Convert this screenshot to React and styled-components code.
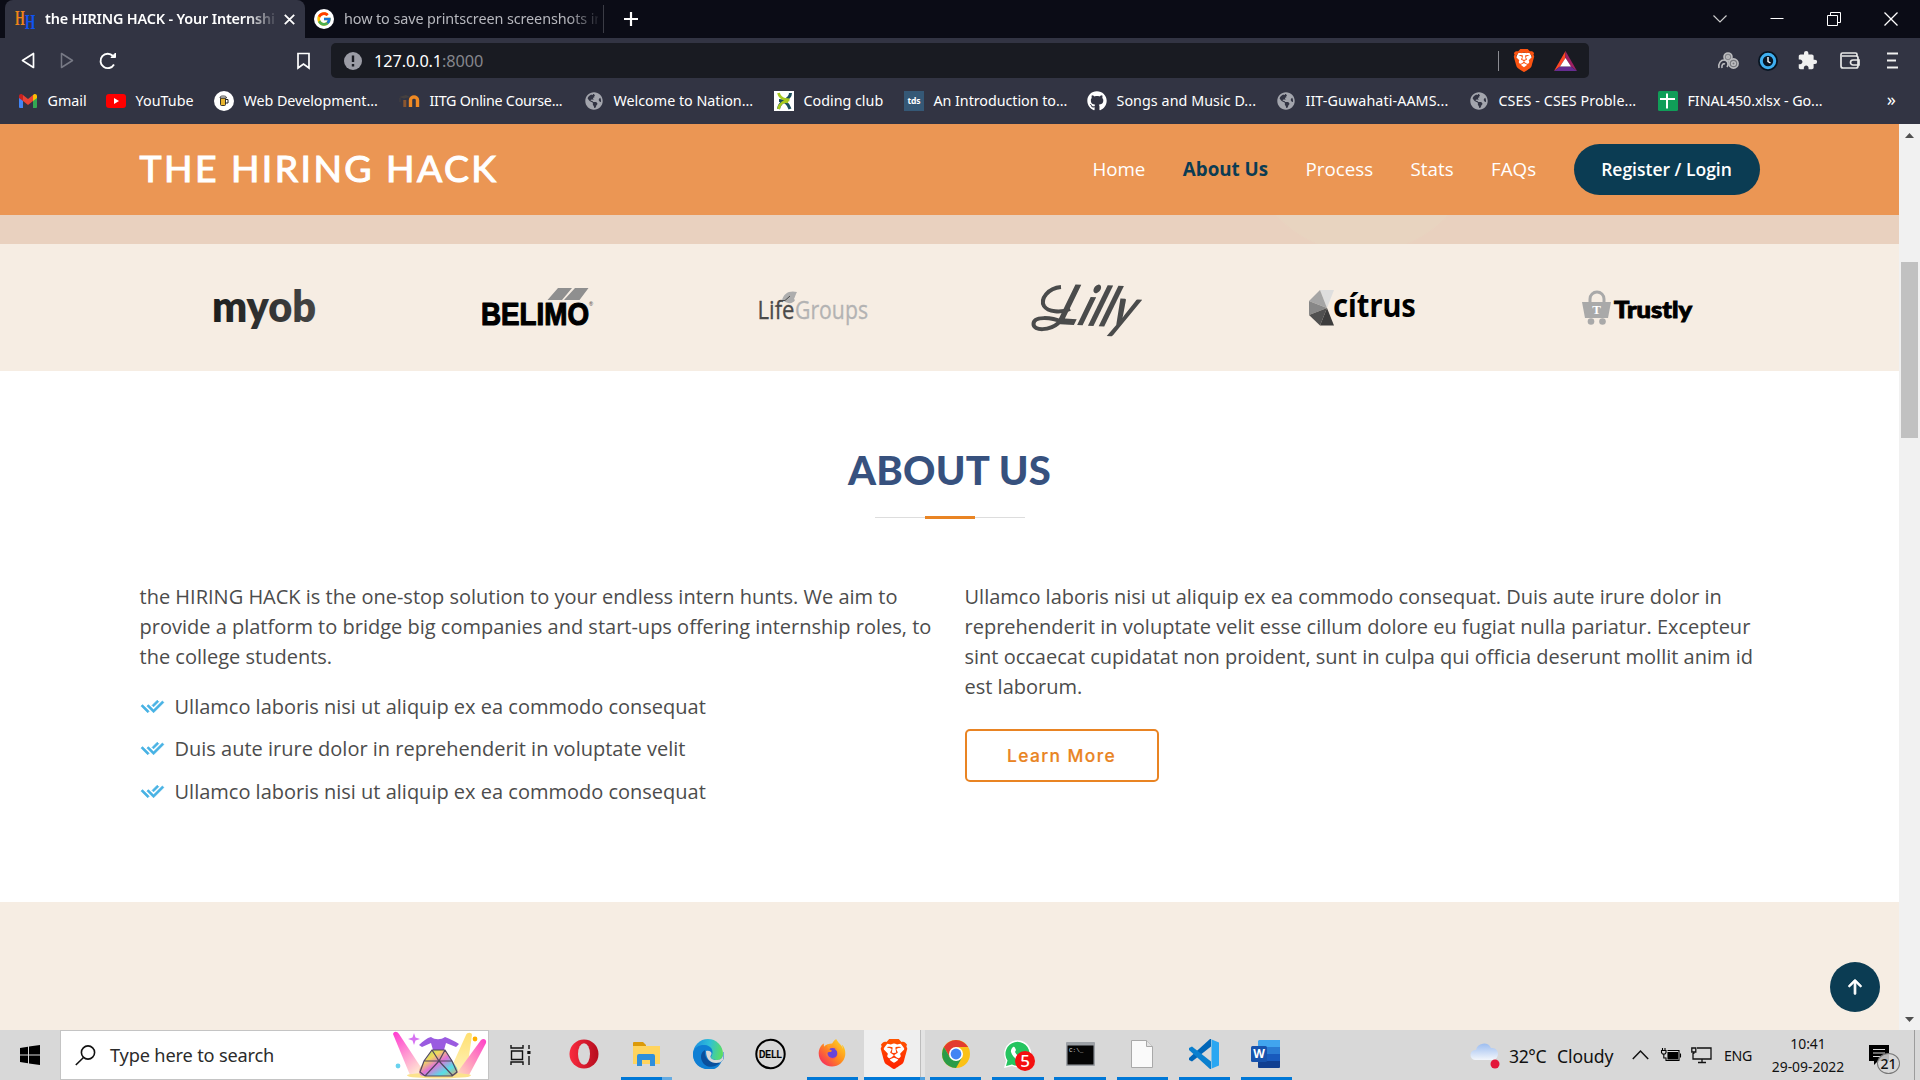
import React from "react";
import styled, { createGlobalStyle, css } from "styled-components";
import { RiCheckDoubleLine } from "react-icons/ri";
import { BsArrowUpShort } from "react-icons/bs";
import { FcGoogle } from "react-icons/fc";
import { SiBrave } from "react-icons/si";
import { FaGithub, FaGlobeAmericas, FaFirefoxBrowser } from "react-icons/fa";
import { MdExtension } from "react-icons/md";

const UI = `"Noto Sans", "Open Sans", sans-serif`;
const BODY = `"Open Sans", "Noto Sans", sans-serif`;
const HEAD = `Lato, "Open Sans", sans-serif`;

const Global = createGlobalStyle`
  * { box-sizing: border-box; }
  body { margin: 0; background: #fff; overflow: hidden; }
  svg { display: block; flex: none; overflow: visible; }
`;

const Screen = styled.div`
  width: 1920px;
  height: 1080px;
  display: flex;
  flex-direction: column;
  overflow: hidden;
  font-family: ${UI};
`;

/* ---------- browser chrome ---------- */
const TabStrip = styled.div`
  height: 38px;
  background: #0b0c16;
  display: flex;
  align-items: stretch;
  padding-left: 5px;
`;
const Tab = styled.div`
  display: flex;
  align-items: center;
  width: ${(p) => p.$w}px;
  padding-left: ${(p) => (p.$active ? 10 : 9)}px;
  gap: 10px;
  font-size: 14.4px;
  color: #b6b7bd;
  white-space: nowrap;
  ${(p) =>
    p.$active &&
    css`
      background: #323443;
      color: #fff;
      font-weight: 600;
      border-radius: 8px 8px 0 0;
    `}
`;
const TabTitle = styled.div`
  width: ${(p) => p.$w}px;
  overflow: hidden;
  padding-bottom: 1px;
  letter-spacing: ${(p) => p.$ls}px;
  mask-image: linear-gradient(90deg, #000 88%, rgba(0, 0, 0, 0.12));
`;
const TabSep = styled.div`
  width: 1px;
  height: 28px;
  align-self: center;
  margin-left: 1px;
  background: #3b3c45;
`;
const NewTab = styled.div`
  display: flex;
  align-items: center;
  margin-left: 19px;
`;
const WindowButtons = styled.div`
  margin-left: auto;
  display: flex;
  align-items: center;
  gap: 43px;
  padding-right: 22px;
`;
const Toolbar = styled.div`
  height: 45px;
  background: #323443;
  display: flex;
  align-items: center;
  padding: 0 22px 0 21px;
`;
const NavButtons = styled.div`
  display: flex;
  align-items: center;
  gap: 25px;
  width: 275px;
`;
const AddressBar = styled.div`
  width: 1258px;
  height: 35px;
  margin-left: 20px;
  background: #191b22;
  border-radius: 5px;
  display: flex;
  align-items: center;
  padding: 0 12px 0 13px;
`;
const Url = styled.div`
  margin-left: 12px;
  flex: 1;
  color: #fff;
  font-size: 16.3px;
  letter-spacing: -0.1px;
  span { color: #85868c; }
`;
const BarDivider = styled.div`
  width: 1px;
  height: 20px;
  margin-right: 15px;
  background: #8b8c92;
`;
const Extensions = styled.div`
  margin-left: auto;
  display: flex;
  align-items: center;
  gap: 20px;
`;
const Bookmarks = styled.div`
  height: 41px;
  background: #323443;
  display: flex;
  align-items: center;
  padding: 0 24px 6px 18px;
  color: #fff;
`;
const Bookmark = styled.div`
  width: ${(p) => p.$w}px;
  display: flex;
  align-items: center;
  gap: 9.5px;
  font-size: 14.3px;
  letter-spacing: ${(p) => p.$ls || 0}px;
  white-space: nowrap;
`;
const IconBox = styled.div`
  width: 20px;
  display: flex;
  justify-content: center;
  color: #a3a5ad;
`;
const Square = styled.div`
  width: 20px;
  height: 20px;
  background: #355876;
  color: #fff;
  font: 700 8.5px/20px ${UI};
  text-align: center;
`;
const Overflow = styled.div`
  margin-left: auto;
  font-size: 18px;
  line-height: 18px;
  padding-bottom: 4px;
`;

/* ---------- web page ---------- */
const Viewport = styled.div`
  height: 906px;
  display: flex;
`;
const Page = styled.div`
  width: 1899px;
  display: flex;
  flex-direction: column;
  position: relative;
`;
const Header = styled.header`
  height: 91px;
  background: #eb9654;
  display: flex;
  align-items: center;
  padding: 0 139.5px;
`;
const Logo = styled.h1`
  margin: 0;
  padding-bottom: 3px;
  font: 400 37.3px/1 ${HEAD};
  -webkit-text-stroke: 1.1px #fff;
  letter-spacing: 2.45px;
  color: #fff;
  flex: 1;
  white-space: nowrap;
`;
const Nav = styled.nav`
  display: flex;
  align-items: center;
  gap: 37.4px;
  font: 500 18.77px/1 ${BODY};
  white-space: nowrap;
`;
const NavLink = styled.a`
  color: ${(p) => (p.$active ? "#0b3c53" : "#fff")};
  font-weight: ${(p) => (p.$active ? 700 : 500)};
`;
const Register = styled.a`
  width: 186px;
  height: 51px;
  border-radius: 26px;
  background: #0b3c53;
  color: #fff;
  font-weight: 600;
  font-size: 17.5px;
  display: flex;
  align-items: center;
  justify-content: center;
`;
const HeroEdge = styled.div`
  height: 29px;
  background: radial-gradient(circle 118px at 1362px -79.5px, #e8d4c0 98.5%, rgba(232, 212, 192, 0) 100%), #e9d1bf;
`;
const Clients = styled.section`
  height: 127px;
  background: #f6ede3;
  display: flex;
  align-items: center;
  padding: 0 124.5px;
`;
const Client = styled.div`
  flex: 1;
  display: flex;
  justify-content: center;
`;
const About = styled.section`
  height: 531px;
  background: #fff;
  padding: 75px 124.5px 0;
`;
const Heading = styled.h2`
  margin: 0;
  height: 49px;
  font: 900 40px/49px ${HEAD};
  letter-spacing: 0.25px;
  color: #37517e;
  text-align: center;
`;
const Divider = styled.div`
  width: 150px;
  height: 3px;
  margin: 21px auto 0;
  background: linear-gradient(#e98423, #e98423) center / 50px 3px no-repeat,
    linear-gradient(#ddd, #ddd) 0 1px / 150px 1px no-repeat;
`;
const Columns = styled.div`
  display: grid;
  grid-template-columns: 1fr 1fr;
  margin-top: 63px;
`;
const Column = styled.div`
  padding: 0 15px;
  font: 400 20px/30px ${BODY};
  color: #4c4c4c;
`;
const Paragraph = styled.p`
  margin: 0 0 20px;
`;
const Item = styled.div`
  display: flex;
  gap: 10px;
  height: 42.4px;
  svg { margin-top: 2px; color: #47b2e4; stroke: #47b2e4; stroke-width: 0.7px; }
`;
const LearnMore = styled.a`
  display: inline-flex;
  align-items: center;
  justify-content: center;
  width: 194px;
  height: 53px;
  margin-top: 7px;
  border: 2px solid #e98423;
  border-radius: 5px;
  color: #e98423;
  font: 500 17.4px/1 Inter, sans-serif;
  -webkit-text-stroke: 0.2px #e98423;
  letter-spacing: 1.4px;
`;
const Next = styled.section`
  flex: 1;
  background: #f6ede3;
`;
const BackToTop = styled.div`
  position: absolute;
  right: 19px;
  bottom: 18px;
  width: 50px;
  height: 50px;
  border-radius: 50%;
  background: #0b3c53;
  color: #fff;
  display: flex;
  align-items: center;
  justify-content: center;
  svg { stroke: #fff; stroke-width: 0.4px; }
`;
const Scrollbar = styled.div`
  width: 21px;
  background: #f1f1f1;
  display: flex;
  flex-direction: column;
  align-items: center;
  padding: 9px 0 8px;
`;
const Thumb = styled.div`
  width: 17px;
  height: 176px;
  margin-top: 124px;
  margin-bottom: auto;
  background: #c1c1c1;
`;

/* ---------- taskbar ---------- */
const Taskbar = styled.div`
  height: 50px;
  background: #d8d8d8;
  display: flex;
  align-items: stretch;
  color: #111;
`;
const Start = styled.div`
  width: 60px;
  display: flex;
  align-items: center;
  justify-content: center;
`;
const Search = styled.div`
  width: 429px;
  background: #fff;
  border: 1px solid #c4c4c4;
  display: flex;
  align-items: center;
  padding-left: 14px;
  font-size: 18.2px;
  color: #2b2b2b;
  span { flex: 1; margin-left: 14px; letter-spacing: -0.17px; }
`;
const TaskView = styled.div`
  width: 64px;
  display: flex;
  align-items: center;
  padding-left: 21px;
`;
const TaskApp = styled.div`
  width: 62px;
  display: flex;
  align-items: center;
  justify-content: center;
  background: ${(p) =>
    p.$active
      ? "linear-gradient(90deg,transparent 1px,#efefef 1px,#efefef 57px,#bdbdbd 57px,#bdbdbd 58px,#e4e4e4 58px)"
      : "none"};
  border-bottom: 3px solid transparent;
  border-image: ${(p) =>
      p.$mark === "stack"
        ? "linear-gradient(90deg,transparent 6px,#0078d7 6px,#0078d7 47px,#65abe2 47px,#65abe2 57px,transparent 57px)"
        : p.$mark === "wide"
          ? "linear-gradient(90deg,transparent 1px,#0078d7 1px,#0078d7 57px,#4d9fdf 57px)"
          : p.$mark
            ? "linear-gradient(90deg,transparent 5.5px,#0078d7 5.5px,#0078d7 56.5px,transparent 56.5px)"
            : "linear-gradient(transparent,transparent)"}
    0 0 1 0;
`;
const Badge = styled.div`
  position: absolute;
  right: -3px;
  bottom: -3px;
  width: 20px;
  height: 20px;
  border-radius: 50%;
  background: #f40f0f;
  color: #fff;
  font: 500 17px/20px ${UI};
  text-align: center;
`;
const Stack = styled.div`
  position: relative;
`;
const Tray = styled.div`
  margin-left: auto;
  display: flex;
  align-items: center;
  white-space: nowrap;
`;
const TrayText = styled.div`
  width: ${(p) => p.$w}px;
  margin-left: ${(p) => p.$ml || 0}px;
  font-size: ${(p) => p.$size}px;
  letter-spacing: ${(p) => p.$ls || 0}px;
  padding-top: ${(p) => (p.$size > 16 ? 2 : 0)}px;
`;
const TrayIcon = styled.div`
  margin-left: ${(p) => p.$ml || 0}px;
`;
const Clock = styled.div`
  width: 92px;
  text-align: center;
  font-size: 13.9px;
  line-height: 23px;
  letter-spacing: 0;
`;
const Notice = styled.div`
  position: relative;
  margin-left: 15px;
  width: 45px;
`;
const Count = styled.div`
  position: absolute;
  left: 8px;
  top: 8px;
  width: 23px;
  height: 21px;
  border: 1px solid #777;
  border-radius: 50%;
  background: rgba(216, 216, 216, 0.85);
  font: 500 14px/19px ${UI};
  text-align: center;
`;
const ShowDesktop = styled.div`
  width: 6px;
  align-self: stretch;
  border-left: 1px solid #9c9c9c;
`;

const Globe = () => <FaGlobeAmericas size={18} />;

const Gmail = () => (
  <svg width="18" height="14" viewBox="0 0 18 14">
    <path d="M0 2v11a1 1 0 0 0 1 1h3V6z" fill="#4285f4" />
    <path d="M18 2v11a1 1 0 0 1-1 1h-3V6z" fill="#34a853" />
    <path d="M14 1v6l4-3V2c0-2-2-2.500-3-1.700z" fill="#fbbc04" />
    <path d="M0 2v2l4 3V1L3 .3C2-.5 0 0 0 2z" fill="#c5221f" />
    <path d="M4 1v6l5 4 5-4V1L9 5z" fill="#ea4335" />
  </svg>
);
const YouTube = () => (
  <svg width="20" height="14" viewBox="0 0 20 14">
    <rect width="20" height="14" rx="3" fill="#f00" />
    <path d="M8 4v6l5-3z" fill="#fff" />
  </svg>
);
const Beer = () => (
  <svg width="20" height="20" viewBox="0 0 20 20">
    <circle cx="10" cy="10" r="10" fill="#fff" />
    <rect x="6.500" y="7" width="5" height="7.500" rx="1" fill="#e9b52e" stroke="#222" strokeWidth=".9" />
    <path d="M11.500 8.500H14v3.500h-2.500" fill="none" stroke="#222" />
    <path d="M6 7c0-2 1.500-2 3-2s3.500 0 3.500 2z" fill="#eee" stroke="#222" strokeWidth=".8" />
  </svg>
);
const Moodle = () => (
  <svg width="20" height="14" viewBox="0 0 20 14">
    <path d="M-1 3l7-2 4 2-6 1.500z" fill="#454040" />
    <path d="M0 4v4" stroke="#454040" />
    <path d="M4.800 13V6" stroke="#8a5630" strokeWidth="3" />
    <path d="M10.500 13V6c0-4 7-4 7 0v7" fill="none" stroke="#f08a24" strokeWidth="3.400" />
  </svg>
);
const CodingClub = () => (
  <svg width="20" height="20" viewBox="0 0 20 20">
    <rect width="20" height="20" fill="#fff" />
    <path d="M16.500 2c0 4-3 6-6.500 8-3 2-5 4-5.500 8M5 9.500c4 0 9 2 11 8.500" stroke="#1b4d5c" strokeWidth="3" fill="none" />
    <path d="M4.500 2c1 4 3 5.500 7 6.500l4 .5M14 11c-4-1-8 1-9.500 7" stroke="#a8c91f" strokeWidth="2.800" fill="none" />
  </svg>
);
const Sheets = () => (
  <svg width="20" height="20" viewBox="0 0 20 20">
    <rect width="20" height="20" rx="1.500" fill="#109d58" />
    <path d="M2 8h15M9 2.500v15" stroke="#fff" strokeWidth="2" />
  </svg>
);

const bookmarks = [
  ["Gmail", 88, <Gmail />, 0],
  ["YouTube", 108, <YouTube />, 0.05],
  ["Web Development...", 186, <Beer />, -0.05],
  ["IITG Online Course...", 184, <Moodle />, -0.26],
  ["Welcome to Nation...", 190, <Globe />, 0],
  ["Coding club", 130, <CodingClub />, 0],
  ["An Introduction to...", 183, <Square>tds</Square>, -0.04],
  ["Songs and Music D...", 189, <FaGithub size={20} color="#fff" />, 0.06],
  ["IIT-Guwahati-AAMS...", 193, <Globe />, 0.09],
  ["CSES - CSES Proble...", 189, <Globe />, 0.08],
  ["FINAL450.xlsx - Go...", 170, <Sheets />, -0.07],
];

const Chrome = () => (
  <svg width="28" height="28" viewBox="0 0 28 28">
    <circle cx="14" cy="14" r="14" fill="#fbc116" />
    <path d="M1.900 7A14 14 0 0 1 26.100 7H14L8 17.500z" fill="#e33b2e" />
    <path d="M1.900 7A14 14 0 0 0 14 28l6-10.500H8z" fill="#2a9c48" />
    <circle cx="14" cy="14" r="7" fill="#fff" />
    <circle cx="14" cy="14" r="5.400" fill="#4285f4" />
  </svg>
);
const Edge = () => (
  <svg width="30" height="30" viewBox="0 0 30 30">
    <circle cx="15" cy="15" r="15" fill="url(#gEdge)" />
    <path d="M0 14C1 8 7 5.500 12 6c5 .5 8 4 7.500 8-.3 2-1.500 3-1.500 4 0 2 3 3 6 3 3.500 0 5-2 6-5v-3h.5v10L24 30H12C4 28-.5 22 0 14z" fill="#0f7fd4" />
    <path d="M12 11c-4 2-5 7-3 11 2 5 8 7 13 5 3-1 5-3 6-5-1 .5-3 1.500-6 1.300-7-.3-11-5-10-12.300z" fill="#0a4f9c" />
    <path d="M13 12c3-1 6 .5 5.500 3-.5 1.500-1.500 2-.8 3.500 1 2 4 2.700 7 2.500 3.500-.3 4.500-2.300 5.300-4.500v4.500l-3 2.500c-8 2-14-2-14-11.500z" fill="#d8d8d8" />
    <path d="M31 20v11H19c5-1.500 8-4.500 9.500-8.500z" fill="#d8d8d8" />
  </svg>
);
const Dell = () => (
  <svg width="31" height="30" viewBox="0 0 31 30">
    <ellipse cx="15.500" cy="15" rx="14.200" ry="14.200" fill="none" stroke="#000" strokeWidth="2" />
    <text x="4" y="18.800" fontSize="10.800" fontWeight="700" fontFamily="Liberation Sans, Arial, sans-serif" stroke="#000" strokeWidth=".2" textLength="23" lengthAdjust="spacingAndGlyphs">DELL</text>
  </svg>
);
const Firefox = () => (
  <svg width="29" height="29" viewBox="0 0 29 29">
    <circle cx="14" cy="15.500" r="11" fill="url(#gFoxBody)" />
    <circle cx="14.500" cy="14" r="5" fill="#6a45d8" />
    <FaFirefoxBrowser size={28} fill="url(#gFox)" />
  </svg>
);
const Opera = () => (
  <svg width="30" height="30" viewBox="0 0 30 30">
    <ellipse cx="15" cy="15" rx="14.500" ry="14.500" fill="url(#gOpera)" />
    <ellipse cx="15" cy="15" rx="6" ry="10.800" fill="#d8d8d8" />
  </svg>
);
const Explorer = () => (
  <svg width="28" height="24" viewBox="0 0 28 24">
    <path d="M1 1a1 1 0 0 1 1-1h9l3 3v5H1z" fill="#dc9a09" />
    <path d="M1 4h27v18H1z" fill="#ffd45e" />
    <path d="M5 24V14a2 2 0 0 1 2-2h14a2 2 0 0 1 2 2v10h-5v-6h-8v6z" fill="#2f8fdc" />
  </svg>
);
const Terminal = () => (
  <svg width="29" height="24" viewBox="0 0 29 24">
    <rect width="29" height="24" rx="1" fill="#9da1a6" />
    <rect x="1.500" y="3.500" width="26" height="19" fill="#050505" />
    <text x="3" y="10" fontSize="6" fill="#ddd" fontFamily="Liberation Mono, monospace">C:\_</text>
  </svg>
);
const FileIcon = () => (
  <svg width="22" height="28" viewBox="0 0 22 28">
    <path d="M.5.5h15l6 6v21H.5z" fill="#fafafa" stroke="#a9a9a9" />
    <path d="M15.500.5v6h6" fill="#e3e3e3" stroke="#a9a9a9" />
  </svg>
);
const VSCode = () => (
  <svg width="30" height="30" viewBox="0 0 30 30">
    <path d="M22 7.500L3 22.500 0 21v-2L21 0h1z" fill="#0066b8" />
    <path d="M22 22.500L3 7.500 0 9v2l21 19h1z" fill="#0a80cf" />
    <path d="M21.500 0L30 3.500v23L21.500 30c1 0 1-1 1-1V1s0-1-1-1z" fill="#2aa7f2" />
  </svg>
);
const Word = () => (
  <svg width="30" height="28" viewBox="0 0 30 28">
    <path d="M8 0h21v7H7V1z" fill="#41a5ee" />
    <path d="M7 7h22v7H7z" fill="#2b7cd3" />
    <path d="M7 14h22v7H7z" fill="#185abd" />
    <path d="M7 21h22v6a1 1 0 0 1-1 1H8a1 1 0 0 1-1-1z" fill="#103f91" />
    <rect y="6" width="16" height="16" rx="1.500" fill="#1753ad" />
    <text x="8" y="18.300" fontSize="12" fontWeight="700" textAnchor="middle" fill="#fff" fontFamily="Open Sans, sans-serif">W</text>
  </svg>
);
const DiscoDress = () => (
  <svg width="96" height="48" viewBox="0 0 96 48">
    <path d="M1 3c1-3 4-3 6 0l27 41H18z" fill="url(#gBeamL)" />
    <path d="M74 4c1-3 6-3 6 0l-6 42H55z" fill="url(#gBeamY)" />
    <path d="M89 9c2-2 6-1 5 3L76 46H62z" fill="url(#gBeamR)" />
    <ellipse cx="47" cy="44.500" rx="32" ry="3" fill="#fbe28c" />
    <path d="M22 2l1.500 4.500L28 8l-4.500 1.500L22 14l-1.500-4.500L16 8l4.500-1.500z" fill="#d672f2" />
    <circle cx="83" cy="8" r="2.400" fill="#ffb000" />
    <circle cx="6" cy="35" r="2.400" fill="#69d2ee" />
    <path d="M27 14C31 10 35 7 39 6c4 3 10 3 14 0 5 2 10 4 14 7l-3 3-10-4-2 7H41l-2-7-9 4z" fill="#9a5be0" />
    <path d="M40 19h13l12 18c2 5-1 7-4 8H31c-4-1-5-4-3-8z" fill="url(#gDress)" />
    <path d="M40 19h13l7 11 5 11-5 4H33l-5-4 4-11zM32 30h28M40 19l7 11 6-11M47 30L33 45M47 30l14 15" fill="none" stroke="#51465f" strokeWidth="1.200" />
  </svg>
);

const Defs = () => (
  <svg width="0" height="0">
    <defs>
      <linearGradient id="gOpera" x1="0" x2="1"><stop offset="0" stopColor="#fa2b3f" /><stop offset="1" stopColor="#b50d1e" /></linearGradient>
      <linearGradient id="gEdge" x1="0" y1=".3" x2="1" y2=".5"><stop offset="0" stopColor="#1b8fe0" /><stop offset=".5" stopColor="#2fbfd8" /><stop offset="1" stopColor="#5fe05a" /></linearGradient>
      <linearGradient id="gFox" x1="1" y1="0" x2="0" y2="1"><stop offset="0" stopColor="#ffe226" /><stop offset=".5" stopColor="#ff8a1e" /><stop offset="1" stopColor="#f5156c" /></linearGradient>
      <linearGradient id="gFoxBody" x1="0" y1="0" x2="0" y2="1"><stop offset="0" stopColor="#ffab22" /><stop offset="1" stopColor="#f83a5b" /></linearGradient>
      <linearGradient id="gBrave" x1="0" y1="0" x2="0" y2="1"><stop offset="0" stopColor="#ff5500" /><stop offset="1" stopColor="#ff2000" /></linearGradient>
      <linearGradient id="gBeamL" x1="0" y1="0" x2=".6" y2="1"><stop offset="0" stopColor="#ff38d1" /><stop offset="1" stopColor="#ffe3d2" /></linearGradient>
      <linearGradient id="gBeamY" x1="0" y1="0" x2="0" y2="1"><stop offset="0" stopColor="#ffe070" /><stop offset="1" stopColor="#fff3c2" /></linearGradient>
      <linearGradient id="gBeamR" x1="1" y1="0" x2="0" y2="1"><stop offset="0" stopColor="#ff3fc8" /><stop offset="1" stopColor="#ffe7b8" /></linearGradient>
      <linearGradient id="gDress" x1="0" y1="0" x2="1" y2="1"><stop offset="0" stopColor="#7fe26b" /><stop offset=".3" stopColor="#f2d95c" /><stop offset=".5" stopColor="#e072d8" /><stop offset=".75" stopColor="#55dfe6" /><stop offset="1" stopColor="#f0a05e" /></linearGradient>
      <linearGradient id="gCloud" x1="0" y1="0" x2="0" y2="1"><stop offset="0" stopColor="#9dbdf0" /><stop offset="1" stopColor="#f2f6fb" /></linearGradient>
      <linearGradient id="gMyob" x1="0" x2="1"><stop offset="0" stopColor="#1c1e1e" /><stop offset="1" stopColor="#454545" /></linearGradient>
    </defs>
  </svg>
);
const DefsHolder = styled.div`
  height: 0;
`;

const BraveLion = ({ w, h, fill }) => (
  <svg width={w} height={h} viewBox="2 0 20 24" preserveAspectRatio="none">
    <path d="M6 4h12l2 5-3 10-5 3.500L7 19 4 9z" fill="#fff" />
    <SiBrave size={24} fill={fill} />
  </svg>
);
const Bat = styled.svg`
  margin-left: 20px;
`;

export default function App() {
  return (
    <Screen>
      <Global />
      <DefsHolder><Defs /></DefsHolder>
      <TabStrip>
        <Tab $active $w={300}>
          <svg width="20" height="20" viewBox="0 0 20 20" fontFamily="Liberation Serif, serif" fontWeight="700">
            <text x="0" y="15.500" fontSize="22" textLength="9.800" lengthAdjust="spacingAndGlyphs" fill="#f08418">H</text>
            <text x="9.900" y="20" fontSize="22" textLength="10.300" lengthAdjust="spacingAndGlyphs" fill="#0f53f0">H</text>
          </svg>
          <TabTitle $w={229} $ls={-0.16}>the HIRING HACK - Your Internship</TabTitle>
          <svg width="11" height="11" viewBox="0 0 11 11" stroke="#fff" strokeWidth="1.800"><path d="M.8.8l9.400 9.400M10.200.8L.8 10.200" /></svg>
        </Tab>
        <Tab $w={297}>
          <svg width="20" height="20" viewBox="0 0 20 20">
            <circle cx="10" cy="10" r="10" fill="#fff" />
            <g transform="translate(2 2)"><FcGoogle size={16} /></g>
          </svg>
          <TabTitle $w={254} $ls={-0.09}>how to save printscreen screenshots in windows</TabTitle>
        </Tab>
        <TabSep />
        <NewTab>
          <svg width="16" height="16" viewBox="0 0 16 16" stroke="#fff" strokeWidth="2.200"><path d="M8 1v14M1 8h14" /></svg>
        </NewTab>
        <WindowButtons>
          <svg width="14" height="14" viewBox="0 0 14 14" fill="none" stroke="#ccc" strokeWidth="1.200"><path d="M.5 3.500L7 10l6.500-6.500" /></svg>
          <svg width="14" height="14" viewBox="0 0 14 14" stroke="#fff" strokeWidth="1"><path d="M.5 6.500h13" /></svg>
          <svg width="14" height="14" viewBox="0 0 14 14" fill="none" stroke="#fff" strokeWidth="1"><path d="M.5 3.500h10v10h-10zM3.500 3V.500h10v10H11" /></svg>
          <svg width="14" height="14" viewBox="0 0 14 14" stroke="#fff" strokeWidth="1.300"><path d="M.5.5l13 13M13.500.5l-13 13" /></svg>
        </WindowButtons>
      </TabStrip>
      <Toolbar>
        <NavButtons>
          <svg width="14" height="17" viewBox="0 0 14 17" fill="none" stroke="#fff" strokeWidth="1.700" strokeLinejoin="round"><path d="M12.500 1.500v14L1.500 8.500z" /></svg>
          <svg width="14" height="17" viewBox="0 0 14 17" fill="none" stroke="#777985" strokeWidth="1.500" strokeLinejoin="round"><path d="M1.500 1.500v14l11-7z" /></svg>
          <svg width="19" height="18" viewBox="0 0 19 18" fill="none" stroke="#fff" strokeWidth="1.900"><path d="M15 12.500A7.200 7.200 0 1 1 14 4" /><path d="M12 5.500h4.500V1z" fill="#fff" strokeWidth="1" /></svg>
        </NavButtons>
        <svg width="15" height="18" viewBox="0 0 15 18" fill="none" stroke="#fff" strokeWidth="1.700"><path d="M2 1.500h11v14.500L7.500 12 2 16z" /></svg>
        <AddressBar>
          <svg width="18" height="18" viewBox="0 0 18 18"><circle cx="9" cy="9" r="9" fill="#9b9ca5" /><path d="M9 3.500v6.500M9 12v2.500" stroke="#191b22" strokeWidth="2.400" /></svg>
          <Url>127.0.0.1<span>:8000</span></Url>
          <BarDivider />
          <BraveLion w={20} h={23} fill="#fb5412" />
          <Bat width="23" height="20" viewBox="0 0 23 20">
            <path d="M11.500 0v7L6 15.500 0 20z" fill="#ff4724" />
            <path d="M11.500 0v7L17 15.500l6 4.500z" fill="#9e1f63" />
            <path d="M6 15.500h11l6 4.500H0z" fill="#662d91" />
            <path d="M11.500 7L6 15.500h11z" fill="#fff" />
          </Bat>
        </AddressBar>
        <Extensions>
          <svg width="21" height="17" viewBox="0 0 21 17" fill="none" stroke="#bdbdc0" strokeWidth="1.600">
            <circle cx="10" cy="5" r="4" fill="#85868c" /><circle cx="10" cy="5" r="1.300" /><circle cx="15.500" cy="11.500" r="4.600" fill="#77787e" /><circle cx="15.500" cy="11.500" r="1.800" /><path d="M1 16c-1-5 2-8 5-8 4 0 5 4 3 7M4 16c-.5-3 1-5 3-4" />
          </svg>
          <svg width="20" height="20" viewBox="0 0 20 20"><circle cx="9" cy="10" r="10" fill="#071522" /><circle cx="9" cy="10" r="6.700" fill="none" stroke="#3eaff0" strokeWidth="3" /><path d="M9 6v4.500l2.500 1.500" fill="none" stroke="#fff" strokeWidth="1.400" /></svg>
          <svg width="21" height="21" viewBox="2 0 21 21"><MdExtension size={21} color="#f0f0f0" /></svg>
          <svg width="20" height="17" viewBox="0 0 20 17" fill="none" stroke="#e8e8e8" strokeWidth="1.700"><path d="M17 4V2.500C17 1.500 16.500 1 15.500 1H2.500C1.500 1 1 1.500 1 2.500v11.500C1 15.300 1.700 16 3 16h13c1.300 0 2-.7 2-2V6c0-1.300-.7-2-2-2H2M19 8h-6a2.500 2.500 0 0 0 0 5h6z" /></svg>
          <svg width="18" height="17" viewBox="0 0 18 17" stroke="#f0f0f0" strokeWidth="1.800"><path d="M7 1.500h11M7 8.500h9M7 15.500h11" /></svg>
        </Extensions>
      </Toolbar>
      <Bookmarks>
        {bookmarks.map(([label, w, icon, ls]) => (
          <Bookmark key={label} $w={w} $ls={ls}>
            <IconBox>{icon}</IconBox>
            {label}
          </Bookmark>
        ))}
        <Overflow>»</Overflow>
      </Bookmarks>

      <Viewport>
        <Page>
          <Header>
            <Logo>THE HIRING HACK</Logo>
            <Nav>
              <NavLink>Home</NavLink>
              <NavLink $active>About Us</NavLink>
              <NavLink>Process</NavLink>
              <NavLink>Stats</NavLink>
              <NavLink>FAQs</NavLink>
              <Register>Register / Login</Register>
            </Nav>
          </Header>
          <HeroEdge />
          <Clients>
            <Client>
              <svg width="112" height="66" viewBox="208 275 112 66">
                <text x="214" y="321.500" fontFamily="Lato, sans-serif" fontWeight="800" fontSize="44" textLength="104" lengthAdjust="spacingAndGlyphs" fill="url(#gMyob)">myob</text>
              </svg>
            </Client>
            <Client>
              <svg width="112" height="66" viewBox="481 275 112 66">
                <path d="M558 288h14l-10 12h-14.500zM575 288h13.500l-9 12H564z" fill="#8f8f8f" />
                <text x="481" y="325" fontFamily="Liberation Sans, Arial, sans-serif" fontWeight="700" fontSize="32" stroke="#000" strokeWidth="1.200" strokeLinejoin="round" textLength="108" lengthAdjust="spacingAndGlyphs">BELIMO</text>
                <text x="589" y="306" fontFamily="Liberation Sans, Arial, sans-serif" fontSize="5.500" fill="#333">®</text>
              </svg>
            </Client>
            <Client>
              <svg width="112" height="66" viewBox="755 275 112 66" fontFamily="Open Sans, sans-serif" fontSize="25">
                <text x="756.500" y="319" textLength="37" lengthAdjust="spacingAndGlyphs" fill="#4a4a4a" stroke="#4a4a4a" strokeWidth=".3">Life</text>
                <text x="794" y="319" textLength="73" lengthAdjust="spacingAndGlyphs" fill="#b3b3b3" stroke="#b3b3b3" strokeWidth=".3">Groups</text>
                <path d="M781 301c1-8 8-11 15-9-2 4-2 5-3 7l1 1c-2 4-7 4-11 1z" fill="#adadad" />
                <path d="M778 300.500h6l5-4.500" stroke="#4a4a4a" fill="none" />
              </svg>
            </Client>
            <Client>
              <svg width="112" height="66" viewBox="1031.500 275 112 66">
                <path d="M1061.500 287c-13 1-21 12-17 19 4 6 17 7 26 3" fill="none" stroke="#4a4b4b" strokeWidth="4" />
                <path d="M1062 322c-10-5-28-6-28 2 0 7 16 7 25-1" fill="none" stroke="#4a4b4b" strokeWidth="4" />
                <g transform="translate(1055 324) rotate(3) skewX(-18)">
                  <text x="0" y="0" fontFamily="Lato, sans-serif" fontStyle="italic" fontWeight="700" fontSize="56" textLength="76" lengthAdjust="spacingAndGlyphs" fill="#4a4b4b">Lilly</text>
                </g>
              </svg>
            </Client>
            <Client>
              <svg width="112" height="66" viewBox="1306 275 112 66">
                <path d="M1320 290h14l-7 18z" fill="#dedede" />
                <path d="M1320 290l7 18-18-7z" fill="#a5a5a5" />
                <path d="M1309 301l18 7-18 7z" fill="#878787" />
                <path d="M1309 315l18-7-7 17.500z" fill="#505050" />
                <path d="M1327 308l7 17.500h-14z" fill="#3d3d3d" />
                <text x="1333" y="316.500" fontFamily="Noto Sans, sans-serif" fontWeight="700" fontSize="31.500" textLength="83" lengthAdjust="spacingAndGlyphs">cítrus</text>
              </svg>
            </Client>
            <Client>
              <svg width="112" height="66" viewBox="1581 275 112 66">
                <path d="M1590 303v-4a7 7 0 0 1 14 0v4" fill="none" stroke="#a9a9a9" strokeWidth="3" />
                <path d="M1582 302h29l-3 16h-23z" fill="#a9a9a9" />
                <ellipse cx="1591" cy="321.500" rx="3.300" ry="3.300" fill="#a9a9a9" /><ellipse cx="1602.500" cy="321.500" rx="3.300" ry="3.300" fill="#a9a9a9" />
                <text x="1596.500" y="314" fontFamily="Liberation Serif, serif" fontWeight="700" fontSize="13" textAnchor="middle" fill="#fff">T</text>
                <text x="1614" y="318" fontFamily="Lato, sans-serif" fontWeight="900" fontSize="22.500" stroke="#000" strokeWidth=".9" textLength="78" lengthAdjust="spacingAndGlyphs">Trustly</text>
              </svg>
            </Client>
          </Clients>
          <About>
            <Heading>ABOUT US</Heading>
            <Divider />
            <Columns>
              <Column>
                <Paragraph>
                  the HIRING HACK is the one-stop solution to your endless intern hunts. We aim to provide a platform to bridge big companies and start-ups offering internship roles, to the college students.
                </Paragraph>
                <Item><RiCheckDoubleLine size={25} />Ullamco laboris nisi ut aliquip ex ea commodo consequat</Item>
                <Item><RiCheckDoubleLine size={25} />Duis aute irure dolor in reprehenderit in voluptate velit</Item>
                <Item><RiCheckDoubleLine size={25} />Ullamco laboris nisi ut aliquip ex ea commodo consequat</Item>
              </Column>
              <Column>
                <Paragraph>
                  Ullamco laboris nisi ut aliquip ex ea commodo consequat. Duis aute irure dolor in reprehenderit in voluptate velit esse cillum dolore eu fugiat nulla pariatur. Excepteur sint occaecat cupidatat non proident, sunt in culpa qui officia deserunt mollit anim id est laborum.
                </Paragraph>
                <LearnMore>Learn More</LearnMore>
              </Column>
            </Columns>
          </About>
          <Next />
          <BackToTop><BsArrowUpShort size={30} /></BackToTop>
        </Page>
        <Scrollbar>
          <svg width="9" height="5" viewBox="0 0 9 5"><path d="M4.500 0L9 5H0z" fill="#505050" /></svg>
          <Thumb />
          <svg width="9" height="5" viewBox="0 0 9 5"><path d="M4.500 5L9 0H0z" fill="#505050" /></svg>
        </Scrollbar>
      </Viewport>

      <Taskbar>
        <Start>
          <svg width="20" height="20" viewBox="0 0 20 20"><path d="M0 3l8-1.200v7.800H0zM9 1.600L20 0v9.600H9zM0 10.500h8v7.800L0 17zM9 10.500h11V20L9 18.400z" /></svg>
        </Start>
        <Search>
          <svg width="21" height="21" viewBox="0 0 21 21" fill="none" stroke="#111" strokeWidth="1.600"><circle cx="13" cy="7.500" r="6.600" /><path d="M8.500 12.500L.8 20" /></svg>
          <span>Type here to search</span>
          <DiscoDress />
        </Search>
        <TaskView>
          <svg width="21" height="20" viewBox="0 0 21 20" fill="none" stroke="#111" strokeWidth="1.400"><path d="M1.500 6h11v8.500h-11zM1 0v3h12V0M1 20v-3h12v3M19 0v4M19 11v9" /><path d="M17.300 7.500h3.200" strokeWidth="3" /></svg>
        </TaskView>
        <TaskApp><Opera /></TaskApp>
        <TaskApp $mark="stack"><Explorer /></TaskApp>
        <TaskApp><Edge /></TaskApp>
        <TaskApp><Dell /></TaskApp>
        <TaskApp $mark="on"><Firefox /></TaskApp>
        <TaskApp $active $mark="wide"><BraveLion w={26} h={30} fill="url(#gBrave)" /></TaskApp>
        <TaskApp $mark="on"><Chrome /></TaskApp>
        <TaskApp $mark="on">
          <Stack>
            <svg width="28" height="28" viewBox="0 0 28 28">
              <path d="M0 28l2-7.500A13.500 13.500 0 1 1 8 26z" fill="#fff" />
              <path d="M2 26l1.500-5.500A12 12 0 1 1 8 24.500z" fill="#25c45f" />
              <path d="M9 7c1-1 2 0 3 3l-1 2c1 2 3 4 5 5l2-2 4 2c0 3-3 4-5 4-5-1-9-5-10-9-.5-2 1-4 2-5z" fill="#fff" />
            </svg>
            <Badge>5</Badge>
          </Stack>
        </TaskApp>
        <TaskApp $mark="on"><Terminal /></TaskApp>
        <TaskApp $mark="on"><FileIcon /></TaskApp>
        <TaskApp $mark="on"><VSCode /></TaskApp>
        <TaskApp $mark="on"><Word /></TaskApp>
        <Tray>
          <TrayIcon>
            <svg width="39" height="28" viewBox="0 0 39 28">
              <path d="M5 19a5 5 0 0 1 1-10 8 8 0 0 1 15-2 6 6 0 0 1 2 12z" fill="url(#gCloud)" />
              <circle cx="25" cy="23" r="4.500" fill="#e3173a" />
            </svg>
          </TrayIcon>
          <TrayText $w={48} $size={17.6} $ls={-0.4}>32°C</TrayText>
          <TrayText $w={75} $size={17.6} $ls={-0.1}>Cloudy</TrayText>
          <svg width="17" height="10" viewBox="0 0 17 10" fill="none" stroke="#111" strokeWidth="1.500"><path d="M.8 9l7.700-8 7.700 8" /></svg>
          <TrayIcon $ml={12}>
            <svg width="20" height="14" viewBox="0 0 20 14" fill="none" stroke="#000" strokeWidth="1.100">
              <path d="M6.500 2.500H18v10H5V9.500" /><path d="M7 4.500h9.500v6.500H7z" fill="#000" /><path d="M19.500 5.500v4" />
              <path d="M1.500 0v2.500M4 0v2.500M.5 2.500h4.500v2L4 6H1.500l-1-1.500zM2.800 6v4h2" />
            </svg>
          </TrayIcon>
          <TrayIcon $ml={10}>
            <svg width="21" height="17" viewBox="0 0 21 17" fill="none" stroke="#111" strokeWidth="1.300"><path d="M6 1h14v11H2V6M11 12v3.500M7 15.500h8M.8 1h4v4h-4zM2.800 5v2" /></svg>
          </TrayIcon>
          <TrayText $w={38} $ml={12} $size={14.2} $ls={-0.3}>ENG</TrayText>
          <Clock>10:41<br />29-09-2022</Clock>
          <Notice>
            <svg width="20" height="20" viewBox="0 0 20 20"><path d="M0 0h20v16H9l-4 4v-4H0z" /><path d="M4 4.500h12M4 8h12M4 11.500h8" stroke="#d8d8d8" strokeWidth="1.200" /></svg>
            <Count>21</Count>
          </Notice>
          <ShowDesktop />
        </Tray>
      </Taskbar>
    </Screen>
  );
}
